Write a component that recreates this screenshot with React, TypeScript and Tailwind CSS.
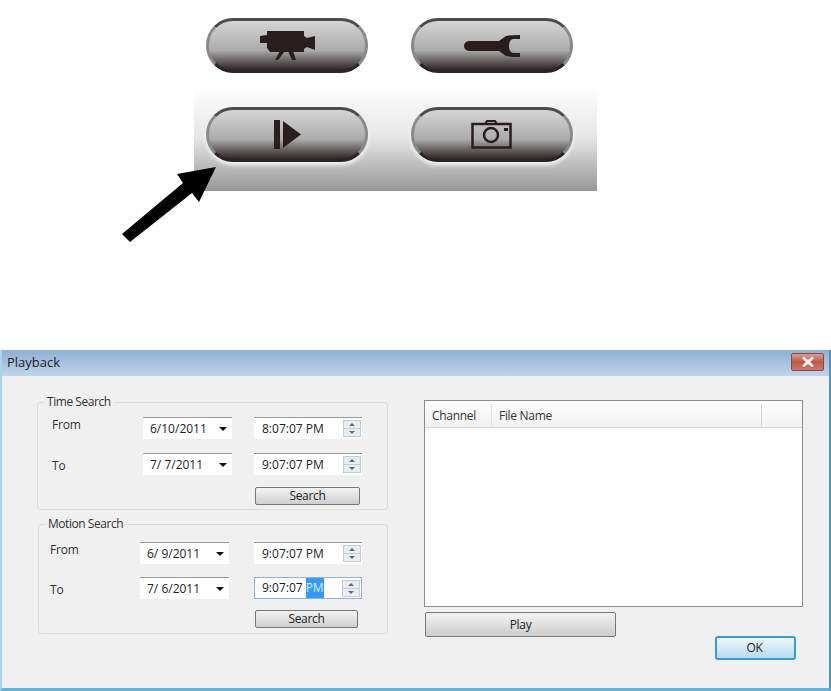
const uiFont = { fontFamily: '"Open Sans", "Noto Sans", sans-serif' };

const VideoIcon = () => (
  <svg width="55" height="31" viewBox="0 0 55 31" className="fill-[#2a1d1d]">
    <path d="M7 1h37v5l3 2 8-2v14l-8-3-3 2v3H10l-3-4v-5H0V6l7-1z" />
    <path d="M20 21h5l-7 9h-3zM28 21h5l3 9h-4z" />
  </svg>
);

const WrenchIcon = () => (
  <svg width="56" height="22" viewBox="0 0 56 22" className="fill-[#2a1d1d]">
    <path d="M5 6H35L42 1Q46 0 56 0V4H49Q45 5 45 11Q45 17 49 18H56V22Q46 22 42 21L35 16H5A5 5 0 0 1 5 6z" />
  </svg>
);

const PlayIcon = () => (
  <svg width="27" height="29" viewBox="0 0 27 29" className="fill-[#2a1d1d]">
    <rect x="0" y="0" width="6" height="29" />
    <path d="M9 1l18 13.5L9 28z" />
  </svg>
);

const CameraIcon = () => (
  <svg width="42" height="29" viewBox="0 0 42 29" fill="none" stroke="#2a1d1d">
    <rect x="1.5" y="4" width="38" height="23.5" strokeWidth="2.5" />
    <path d="M14 4l2-3h8l2 3" strokeWidth="2" />
    <circle cx="20" cy="15" r="7" strokeWidth="2.5" />
    <rect x="33" y="8" width="4" height="3" fill="#2a1d1d" stroke="none" />
  </svg>
);

const PillButton = ({ children }: { children: React.ReactNode }) => (
  <div className="flex h-[55px] w-[162px] items-center justify-center rounded-[27px] border-[3px] border-[#8a8a8a] border-t-[#4c4c4c] border-b-[#2c2424] bg-gradient-to-b from-[#d6d6d6] via-[#ababab] via-60% to-[#2e2626] shadow-[0_3px_4px_rgba(255,255,255,0.85)]">
    {children}
  </div>
);

const Spinner = () => (
  <div className="ml-auto mr-px flex h-[17px] w-[18px] flex-col border border-[#c4ccd6] bg-[#e8edf3]">
    <div className="flex flex-1 items-center justify-center border-b border-[#c4ccd6]">
      <div className="h-0 w-0 border-x-[3px] border-b-[3px] border-x-transparent border-b-[#5a6a80]" />
    </div>
    <div className="flex flex-1 items-center justify-center">
      <div className="h-0 w-0 border-x-[3px] border-t-[3px] border-x-transparent border-t-[#5a6a80]" />
    </div>
  </div>
);

const DateBox = ({ value }: { value: string }) => (
  <div className="flex h-[22px] w-[89px] items-center whitespace-pre border-t border-[#9a9a9a] bg-white pl-[7px] pr-[5px] text-[#222]">
    <span>{value}</span>
    <div className="ml-auto h-0 w-0 border-x-[4px] border-t-[4px] border-x-transparent border-t-[#111]" />
  </div>
);

const TimeBox = ({ value, selected }: { value: string; selected?: boolean }) => (
  <div
    className={
      selected
        ? "flex h-[22px] w-[108px] items-center border border-[#8fb3d9] bg-white pl-[7px] text-[#222]"
        : "flex h-[22px] w-[108px] items-center border-t border-[#9a9a9a] bg-white pl-[8px] text-[#222]"
    }
  >
    {selected ? (
      <>
        <span>{value}</span>
        <span className="ml-[3px] bg-[#3399ff] py-px text-[#dbeeff]">PM</span>
      </>
    ) : (
      <span>{value} PM</span>
    )}
    <Spinner />
  </div>
);

const SearchButton = ({ widthClass }: { widthClass: string }) => (
  <button className={`flex h-[18px] items-center justify-center rounded-[2px] border border-[#777] bg-gradient-to-b from-[#f3f3f3] to-[#cfcfcf] tracking-[-0.3px] text-[#222] ${widthClass}`}>
    Search
  </button>
);

const Legend = ({ children }: { children: string }) => (
  <span className="absolute left-[6px] top-[-9px] bg-[#f0f0f0] px-[3px] leading-[16px] tracking-[-0.45px] text-[#333]">{children}</span>
);

export default function App() {
  return (
    <div className="relative h-[691px] w-[831px] overflow-hidden bg-white text-[12px]" style={uiFont}>
      <div className="h-[350px] pl-[194px]">
        <div className="grid h-[191px] w-[403px] grid-cols-[162px_162px] content-start gap-x-[43px] gap-y-[34px] bg-gradient-to-b from-white from-45% via-[#e6e6e6] via-72% to-[#989898] pl-[12px] pt-[18px]">
          <PillButton><VideoIcon /></PillButton>
          <PillButton><WrenchIcon /></PillButton>
          <PillButton><PlayIcon /></PillButton>
          <PillButton><CameraIcon /></PillButton>
        </div>
      </div>

      {/* pointer arrow over the toolbar */}
      <svg className="absolute left-[100px] top-[150px]" width="130" height="100" viewBox="0 0 130 100">
        <polygon points="116,17 99,52 92,43 30,92 22,84 83,33 77,24" fill="#000" />
      </svg>

      <div className="flex h-[341px] flex-col border-x-2 border-b-[3px] border-l-[#a9d3ea] border-r-[#4f93b8] border-b-[#5fb4d8] bg-[#f0f0f0]">
        <div className="flex h-[26px] shrink-0 items-center justify-between bg-gradient-to-b from-[#8fb0d4] to-[#bfd5ea] pl-[5px] pr-[5px] text-[#222]">
          <span className="text-[13px]">Playback</span>
          <div className="mb-[3px] flex h-[18px] w-[33px] items-center justify-center rounded-[2px] border border-[#8a4a44] bg-gradient-to-b from-[#dc9c90] via-[#bd5a48] to-[#cf7868]">
            <svg width="12" height="10" viewBox="0 0 12 10" fill="none" stroke="#f2ecea" strokeWidth="3">
              <path d="M1 0.5L11 9.5M11 0.5L1 9.5" />
            </svg>
          </div>
        </div>

        <div className="flex flex-1">
          <div className="ml-[35px] mt-[26px] flex w-[351px] flex-col gap-[14px]">
            <div className="relative h-[108px] rounded-[3px] border border-[#dcdcdc] pl-[14px] pt-[14px]">
              <Legend>Time Search</Legend>
              <div className="flex items-start">
                <span className="w-[91px] leading-[16px] tracking-[-0.2px] text-[#333]">From</span>
                <DateBox value="6/10/2011" />
                <div className="ml-[22px]"><TimeBox value="8:07:07" /></div>
              </div>
              <div className="mt-[14px] flex items-start">
                <span className="w-[91px] pt-[5px] leading-[16px] text-[#333]">To</span>
                <DateBox value="7/ 7/2011" />
                <div className="ml-[22px]"><TimeBox value="9:07:07" /></div>
              </div>
              <div className="ml-[203px] mt-[12px]"><SearchButton widthClass="w-[105px]" /></div>
            </div>

            <div className="relative ml-px h-[110px] w-[350px] rounded-[3px] border border-[#dcdcdc] pl-[11px] pt-[17px]">
              <Legend>Motion Search</Legend>
              <div className="flex items-start">
                <span className="w-[90px] leading-[16px] tracking-[-0.2px] text-[#333]">From</span>
                <DateBox value="6/ 9/2011" />
                <div className="ml-[25px]"><TimeBox value="9:07:07" /></div>
              </div>
              <div className="mt-[13px] flex items-start">
                <span className="w-[90px] pt-[5px] leading-[16px] text-[#333]">To</span>
                <DateBox value="7/ 6/2011" />
                <div className="ml-[25px]"><TimeBox value="9:07:07" selected /></div>
              </div>
              <div className="ml-[205px] mt-[11px]"><SearchButton widthClass="w-[103px]" /></div>
            </div>
          </div>

          <div className="ml-[36px] mt-[24px] w-[379px]">
            <div className="h-[207px] border border-[#8c8c8c] bg-white">
              <div className="flex h-[27px] items-center border-b border-[#d8d8d8] bg-gradient-to-b from-white to-[#f1f1f1] pt-[3px] tracking-[-0.3px] text-[#333]">
                <span className="flex h-full w-[67px] items-center border-r border-[#e2e2e2] pl-[7px]">Channel</span>
                <span className="flex h-full w-[270px] items-center border-r border-[#d4d4d4] pl-[7px]">File Name</span>
              </div>
            </div>
            <div className="mt-[5px] flex items-start">
              <button className="ml-px flex h-[25px] w-[191px] items-center justify-center rounded-[2px] border border-[#777] bg-gradient-to-b from-[#f3f3f3] to-[#cdcdcd] tracking-[-0.3px] text-[#222]">
                Play
              </button>
              <button className="ml-[99px] mt-[24px] flex h-[24px] w-[81px] items-center justify-center rounded-[3px] border-2 border-[#3a9cc8] bg-gradient-to-b from-[#eef7fc] to-[#b5dbf0] pr-[2px] tracking-[-0.3px] text-[#222]">
                OK
              </button>
            </div>
          </div>
        </div>
      </div>
    </div>
  );
}
